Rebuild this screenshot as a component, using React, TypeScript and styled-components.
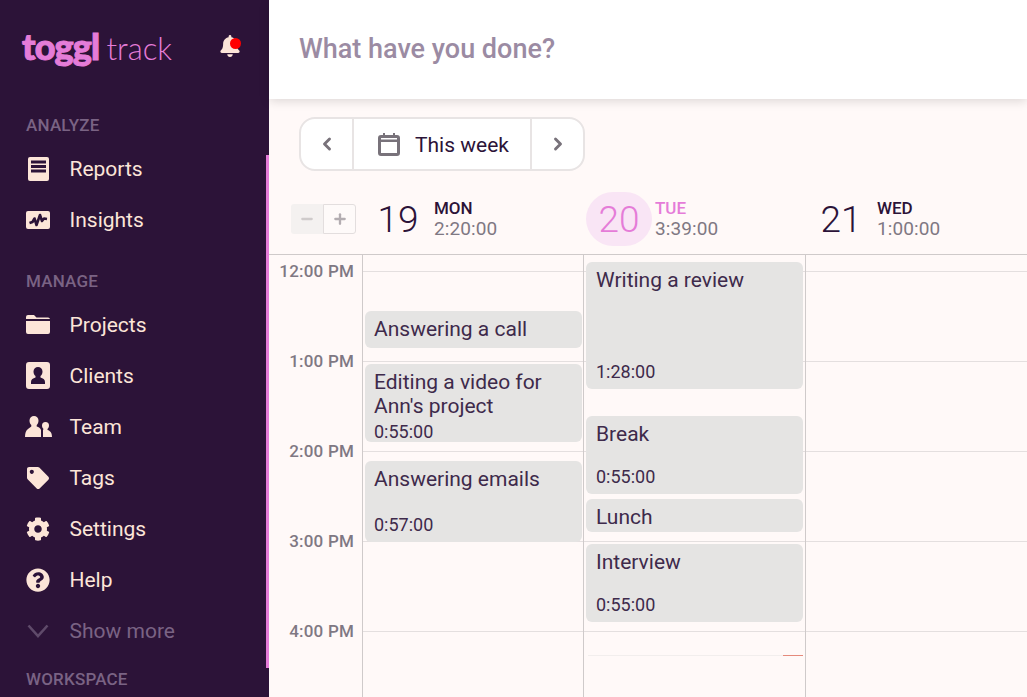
import React, { FunctionComponent, ReactNode } from 'react'
import styled, { createGlobalStyle } from 'styled-components'
import { FaBell, FaCog, FaQuestionCircle, FaTag } from 'react-icons/fa'
import { ChevronLeft, ChevronRight, Minus, Plus } from 'lucide-react'

const GlobalStyle = createGlobalStyle`
  html, body {
    margin: 0;
    height: 100%;
    overflow: hidden;
    font-family: Roboto, "Liberation Sans", sans-serif;
    background: #fff9f8;
  }
`

const Page = styled.div`
  display: flex;
  width: 1027px;
  height: 697px;
  overflow: hidden;
`

const Sidebar = styled.nav`
  position: relative;
  flex: 0 0 269px;
  height: 697px;
  overflow: hidden;
  background: #2c1338;
  color: #fce5d8;
`

const ActiveStrip = styled.div`
  position: absolute;
  top: 155px;
  right: 0;
  width: 3px;
  height: 513px;
  background: #e57cd8;
`

const LogoRow = styled.div`
  display: flex;
  align-items: center;
  height: 107px;
  padding: 0 28px 15px 22px;
  box-sizing: border-box;
`

const Logo = styled.div`
  display: flex;
  align-items: baseline;
  flex: 1;
  color: #e57cd8;
`

const LogoStrong = styled.span`
  font-family: Lato, sans-serif;
  font-weight: 900;
  font-size: 36px;
  letter-spacing: -0.8px;
  -webkit-text-stroke: 1px #e57cd8;
`

const LogoLight = styled.span`
  margin-left: 7px;
  font-family: Lato, sans-serif;
  font-weight: 300;
  font-size: 31px;
`

const Bell = styled.div`
  position: relative;
  display: flex;
  font-size: 22px;
  color: #fce5d8;
`

const BellDot = styled.span`
  position: absolute;
  top: 3px;
  right: 0;
  width: 11px;
  height: 11px;
  border-radius: 50%;
  background: #f00;
`

const SectionLabel = styled.div<{ $gap?: number }>`
  height: 36px;
  margin-top: ${p => p.$gap ?? 18}px;
  padding-left: 26px;
  font-size: 17px;
  font-weight: 500;
  letter-spacing: 0.2px;
  line-height: 36px;
  color: #7a6384;
`

const NavRow = styled.div<{ $muted?: boolean }>`
  display: flex;
  align-items: center;
  height: 51px;
  font-size: 21px;
  color: ${p => (p.$muted ? '#7a6384' : '#fce5d8')};
`

const NavIcon = styled.span<{ $size?: number }>`
  display: flex;
  align-items: center;
  justify-content: center;
  width: 24px;
  margin: 0 19.5px 0 26px;
  font-size: ${p => p.$size ?? 24}px;
`

const Main = styled.main`
  flex: 1;
  display: flex;
  flex-direction: column;
  min-width: 0;
`

const TopBar = styled.header`
  position: relative;
  display: flex;
  align-items: center;
  flex: 0 0 99px;
  box-sizing: border-box;
  padding: 0 0 2px 30px;
  background: #fff;
  box-shadow: 0 2px 10px rgba(0, 0, 0, 0.14);
  font-size: 27px;
  font-weight: 500;
  color: #9b8ba3;
`

const Toolbar = styled.div`
  display: flex;
  flex: 0 0 54px;
  width: 286px;
  margin: 18px 0 0 30px;
  box-sizing: border-box;
  overflow: hidden;
  background: #fff;
  border: 2px solid #e8e4e4;
  border-radius: 16px;
`

const ArrowButton = styled.div`
  display: flex;
  align-items: center;
  justify-content: center;
  flex: 0 0 51px;
  color: #78727a;
`

const RangeButton = styled.div`
  display: flex;
  align-items: center;
  flex: 1;
  gap: 15px;
  padding: 1px 0 0 24px;
  border-left: 2px solid #e8e4e4;
  border-right: 2px solid #e8e4e4;
  font-size: 21px;
  color: #2c1338;
`

const DaysHeader = styled.div`
  display: grid;
  grid-template-columns: 93px 221px 222px 222px;
  flex: 0 0 83px;
`

const ZoomCell = styled.div`
  display: flex;
  align-items: center;
  padding: 13px 0 0 22px;
`

const ZoomButton = styled.div<{ $active?: boolean }>`
  display: flex;
  align-items: center;
  justify-content: center;
  box-sizing: border-box;
  width: ${p => (p.$active ? 33 : 32)}px;
  height: 30px;
  border-radius: ${p => (p.$active ? '0 3px 3px 0' : '3px 0 0 3px')};
  border: ${p => (p.$active ? '1px solid #e3dede' : 'none')};
  background: ${p => (p.$active ? '#fefaf9' : '#f4f1f0')};
  color: ${p => (p.$active ? '#b3adb1' : '#cfcbcb')};
`

const DayCell = styled.div`
  display: flex;
  align-items: center;
  padding: 13px 0 0 3px;
`

const DayNumber = styled.div<{ $today?: boolean }>`
  display: flex;
  align-items: center;
  justify-content: center;
  flex: 0 0 66px;
  height: 54px;
  border-radius: 27px;
  background: ${p => (p.$today ? '#f9e5f5' : 'transparent')};
  font-size: 37px;
  font-weight: 300;
  color: ${p => (p.$today ? '#e57cd8' : '#2c1338')};
`

const DayText = styled.div`
  margin-left: 3px;
`

const DayName = styled.div<{ $today?: boolean }>`
  font-size: 17px;
  font-weight: 500;
  line-height: 20px;
  color: ${p => (p.$today ? '#e57cd8' : '#2c1338')};
`

const DayTotal = styled.div`
  font-size: 19px;
  line-height: 22px;
  letter-spacing: 0.1px;
  color: #7f7883;
`

const Grid = styled.div`
  display: grid;
  grid-template-columns: 93px 221px 222px 222px;
  flex: 1;
  border-top: 1px solid #cfcaca;
  overflow: hidden;
`

const TimeColumn = styled.div`
  display: flex;
  flex-direction: column;
  gap: 70px;
  padding-top: 6px;
`

const TimeLabel = styled.div`
  height: 20px;
  padding-right: 8px;
  text-align: right;
  font-size: 17px;
  font-weight: 500;
  letter-spacing: 0.2px;
  line-height: 20px;
  color: #7f7883;
`

const DayColumn = styled.div`
  position: relative;
  display: flex;
  flex-direction: column;
  padding-top: 16px;
  border-left: 1px solid #cfcaca;
`

const HourLine = styled.div`
  flex: 0 0 90px;
  box-sizing: border-box;
  border-top: 1px solid #e4dfdf;
`

const Entry = styled.div<{ $top: number; $height: number; $inset: number }>`
  position: absolute;
  top: ${p => p.$top}px;
  left: 2px;
  width: 217px;
  height: ${p => p.$height}px;
  box-sizing: border-box;
  display: flex;
  flex-direction: column;
  justify-content: space-between;
  overflow: hidden;
  padding: 6px ${p => p.$inset}px 7px;
  border-radius: 6px;
  background: #e5e4e3;
  color: #3e2a4b;
`

const EntryTitle = styled.div`
  flex: none;
  margin-bottom: 4px;
  font-size: 21px;
  line-height: 24px;
`

const EntryTime = styled.div`
  flex: none;
  font-size: 18px;
  line-height: 20px;
`

const RunningLine = styled.div`
  position: absolute;
  top: 400px;
  left: 4px;
  display: flex;
  width: 215px;
  height: 1px;
  background: #f2eeed;
`

const RunningTip = styled.div`
  margin-left: auto;
  width: 20px;
  height: 1px;
  background: #e58a7c;
`

const ReportsIcon = () => (
  <svg width='21' height='24' viewBox='0 0 21 24'>
    <rect width='21' height='24' rx='2' fill='currentColor' />
    <path fill='#2c1338' d='M3 3.500h15v3H3zM3 8h15v3H3zM3 12.500h15v3H3z' />
  </svg>
)

const InsightsIcon = () => (
  <svg width='24' height='18' viewBox='0 0 24 18'>
    <rect width='24' height='18' rx='2' fill='currentColor' />
    <path d='M3.500 12l3-1 2-3.500 2 6.500 3.500-10 2 6 2-2.500 3 .5' fill='none' stroke='#2c1338' strokeWidth='2.600' strokeLinejoin='round' />
  </svg>
)

const FolderIcon = () => (
  <svg width='24' height='19' viewBox='0 0 24 19'>
    <path fill='currentColor' d='M0 2a2 2 0 0 1 2-2h6l2.500 2.500H22a2 2 0 0 1 2 1.500H0zM0 6h24v11a2 2 0 0 1-2 2H2a2 2 0 0 1-2-2z' />
  </svg>
)

const ClientIcon = () => (
  <svg width='24' height='27' viewBox='0 0 24 27'>
    <path fill='currentColor' fillRule='evenodd' d='M3 0h18a3 3 0 0 1 3 3v21a3 3 0 0 1-3 3H3a3 3 0 0 1-3-3V3a3 3 0 0 1 3-3zM12 5a4.500 4.500 0 0 0-4.500 4.500c0 2 .8 3.500 2 4.600v1.400C7 16.300 5 17.500 5 20v2h14v-2c0-2.500-2-3.700-4.500-4.500v-1.400c1.200-1.100 2-2.600 2-4.600A4.500 4.500 0 0 0 12 5z' />
  </svg>
)

const TeamIcon = () => (
  <svg width='27' height='21' viewBox='0 0 27 21' style={{ flex: 'none' }}>
    <path fill='currentColor' d='M9 0a4.500 4.500 0 0 1 4.500 4.500c0 2-.8 3.500-1.800 4.500v1.500c2 .7 3.800 1.700 4.300 3.500v7H0c0-4 1-6.500 3-8l3.300-2.500V9c-1-1-1.800-2.500-1.800-4.500A4.500 4.500 0 0 1 9 0z' />
    <path fill='currentColor' d='M20.500 6a3.500 3.500 0 0 1 3.500 3.500c0 1.500-.6 2.700-1.500 3.500v1c2.500.8 4.500 2.500 4.500 7H18v-7l.5-1c-.9-.8-1.500-2-1.500-3.500A3.500 3.500 0 0 1 20.500 6z' />
  </svg>
)

const ShowMoreIcon = () => (
  <svg width='22' height='14' viewBox='0 0 22 14'>
    <path d='M1.500 1.500L11 12l9.500-10.500' fill='none' stroke='#5f4a6a' strokeWidth='2.600' />
  </svg>
)

const CalendarIcon = () => (
  <svg width='22' height='23' viewBox='0 0 22 23'>
    <path fill='#78727a' fillRule='evenodd' d='M5 0h2v2h8V0h2v2h2a3 3 0 0 1 3 3v15a3 3 0 0 1-3 3H3a3 3 0 0 1-3-3V5a3 3 0 0 1 3-3h2zM3 9v11h16V9zM3 5v1.500h16V5z' />
  </svg>
)

interface NavItemProps {
  icon: ReactNode
  label: string
  muted?: boolean
  iconSize?: number
}

const NavItem: FunctionComponent<NavItemProps> = ({ icon, label, muted, iconSize }) => (
  <NavRow $muted={muted}>
    <NavIcon $size={iconSize}>{icon}</NavIcon>
    {label}
  </NavRow>
)

interface DayProps {
  date: number
  name: string
  total: string
  today?: boolean
}

const DayHead: FunctionComponent<DayProps> = ({ date, name, total, today }) => (
  <DayCell>
    <DayNumber $today={today}>{date}</DayNumber>
    <DayText>
      <DayName $today={today}>{name}</DayName>
      <DayTotal>{total}</DayTotal>
    </DayText>
  </DayCell>
)

const hours = ['12:00 PM', '1:00 PM', '2:00 PM', '3:00 PM', '4:00 PM']

const mondayEntries = [
  { top: 56, height: 37, title: 'Answering a call' },
  { top: 109, height: 78, title: "Editing a video for Ann's project", time: '0:55:00' },
  { top: 206, height: 81, title: 'Answering emails', time: '0:57:00' }
]

const tuesdayEntries = [
  { top: 7, height: 127, title: 'Writing a review', time: '1:28:00' },
  { top: 161, height: 78, title: 'Break', time: '0:55:00' },
  { top: 244, height: 33, title: 'Lunch' },
  { top: 289, height: 78, title: 'Interview', time: '0:55:00' }
]

const HourLines = () => (
  <>
    {hours.map(h => (
      <HourLine key={h} />
    ))}
  </>
)

interface EntriesProps {
  items: { top: number; height: number; title: string; time?: string }[]
  inset: number
}

const Entries: FunctionComponent<EntriesProps> = ({ items, inset }) => (
  <>
    {items.map(e => (
      <Entry key={e.title} $top={e.top} $height={e.height} $inset={inset}>
        <EntryTitle>{e.title}</EntryTitle>
        {e.time && <EntryTime>{e.time}</EntryTime>}
      </Entry>
    ))}
  </>
)

export default function App() {
  return (
    <Page>
      <GlobalStyle />
      <Sidebar>
        <ActiveStrip />
        <LogoRow>
          <Logo>
            <LogoStrong>toggl</LogoStrong>
            <LogoLight>track</LogoLight>
          </Logo>
          <Bell>
            <FaBell />
            <BellDot />
          </Bell>
        </LogoRow>
        <SectionLabel $gap={0}>ANALYZE</SectionLabel>
        <NavItem icon={<ReportsIcon />} label='Reports' />
        <NavItem icon={<InsightsIcon />} label='Insights' />
        <SectionLabel>MANAGE</SectionLabel>
        <NavItem icon={<FolderIcon />} label='Projects' />
        <NavItem icon={<ClientIcon />} label='Clients' />
        <NavItem icon={<TeamIcon />} label='Team' />
        <NavItem icon={<FaTag />} label='Tags' iconSize={22} />
        <NavItem icon={<FaCog />} label='Settings' />
        <NavItem icon={<FaQuestionCircle />} label='Help' />
        <NavItem icon={<ShowMoreIcon />} label='Show more' muted />
        <SectionLabel $gap={5}>WORKSPACE</SectionLabel>
      </Sidebar>
      <Main>
        <TopBar>What have you done?</TopBar>
        <Toolbar>
          <ArrowButton>
            <ChevronLeft size={20} strokeWidth={3.5} />
          </ArrowButton>
          <RangeButton>
            <CalendarIcon />
            This week
          </RangeButton>
          <ArrowButton>
            <ChevronRight size={20} strokeWidth={3.5} />
          </ArrowButton>
        </Toolbar>
        <DaysHeader>
          <ZoomCell>
            <ZoomButton>
              <Minus size={16} strokeWidth={3.5} />
            </ZoomButton>
            <ZoomButton $active>
              <Plus size={16} strokeWidth={3.5} />
            </ZoomButton>
          </ZoomCell>
          <DayHead date={19} name='MON' total='2:20:00' />
          <DayHead date={20} name='TUE' total='3:39:00' today />
          <DayHead date={21} name='WED' total='1:00:00' />
        </DaysHeader>
        <Grid>
          <TimeColumn>
            {hours.map(h => (
              <TimeLabel key={h}>{h}</TimeLabel>
            ))}
          </TimeColumn>
          <DayColumn>
            <HourLines />
            <Entries items={mondayEntries} inset={9} />
          </DayColumn>
          <DayColumn>
            <HourLines />
            <Entries items={tuesdayEntries} inset={10} />
            <RunningLine>
              <RunningTip />
            </RunningLine>
          </DayColumn>
          <DayColumn>
            <HourLines />
          </DayColumn>
        </Grid>
      </Main>
    </Page>
  )
}
